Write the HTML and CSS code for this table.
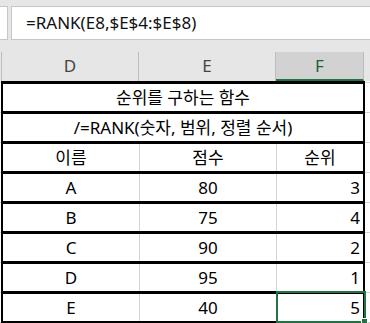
FILE: index.html
```html
<!DOCTYPE html>
<html lang="ko">
<head>
<meta charset="utf-8">
<title>RANK</title>
<link rel="stylesheet" href="styles.css">
</head>
<body>
<div class="app">
  <div class="formula-bar">
    <div class="name-box"></div>
    <div class="formula-input">=RANK(E8,$E$4:$E$8)</div>
  </div>
  <div class="col-headers">
    <div class="corner"></div>
    <div class="col-head">D</div>
    <div class="col-head">E</div>
    <div class="col-head active">F</div>
    <div class="col-head rest"></div>
  </div>
  <div class="sheet">
    <div class="grid">
      <div class="row merged"><div class="cell">순위를 구하는 함수</div></div>
      <div class="row merged"><div class="cell">/=RANK(숫자, 범위, 정렬 순서)</div></div>
      <div class="row"><div class="cell">이름</div><div class="cell">점수</div><div class="cell">순위</div></div>
      <div class="row"><div class="cell">A</div><div class="cell">80</div><div class="cell num">3</div></div>
      <div class="row"><div class="cell">B</div><div class="cell">75</div><div class="cell num">4</div></div>
      <div class="row"><div class="cell">C</div><div class="cell">90</div><div class="cell num">2</div></div>
      <div class="row"><div class="cell">D</div><div class="cell">95</div><div class="cell num">1</div></div>
      <div class="row last"><div class="cell">E</div><div class="cell">40</div><div class="cell num selected">5<span class="sel-frame"></span><span class="fill-handle"></span></div></div>
    </div>
  </div>
</div>
</body>
</html>
```
FILE: styles.css
```css
html, body {
  margin: 0;
  padding: 0;
  background: #ffffff;
}

.app {
  width: 370px;
  height: 323px;
  overflow: hidden;
  font-family: "Noto Sans", "Noto Sans CJK KR", sans-serif;
  color: #000;
}

/* formula bar */
.formula-bar {
  display: flex;
  gap: 3px;
  height: 52px;
  box-sizing: border-box;
  padding: 6px 0 12px 0;
  background: #e6e6e6;
}

.name-box {
  width: 9px;
  margin-left: -1px;
  background: #fff;
  border: 1px solid #c6c6c6;
  box-sizing: border-box;
}

.formula-input {
  flex: 1;
  margin-right: -2px;
  background: #fff;
  border: 1px solid #c6c6c6;
  box-sizing: border-box;
  padding-left: 14px;
  font-size: 17px;
  line-height: 32px;
  color: #111;
}

/* column headers */
.col-headers {
  display: grid;
  grid-template-columns: 2px 137px 137px 88px 1fr;
  height: 29px;
  background: #e6e6e6;
}

.corner {
  border-right: 1px solid #bdbdbd;
}

.col-head {
  border-right: 1px solid #bdbdbd;
  text-align: center;
  font-size: 17px;
  line-height: 28px;
  color: #444;
}

.col-head.active {
  background: #d2d2d2;
  color: #1c5e39;
  border-bottom: 2px solid #217346;
  line-height: 27px;
}

.col-head.rest {
  border-right: none;
}

/* worksheet body: row gridlines continue into column G */
.sheet {
  height: 242px;
  background-color: #fff;
  background-image: repeating-linear-gradient(to bottom,
    transparent 0, transparent 1px,
    #d4d4d4 1px, #d4d4d4 2px,
    transparent 2px, transparent 30px);
}

.grid {
  margin-left: 1px;
  width: 364px;
  box-sizing: border-box;
  border-left: 2px solid #000;
  border-right: 2px solid #000;
  background: #fff;
}

.row {
  display: grid;
  grid-template-columns: 136px 137px 87px;
  height: 30px;
  box-sizing: border-box;
  border-top: 3px solid #000;
}

.row.last {
  height: 33px;
  border-bottom: 3px solid #000;
}

.row.merged {
  grid-template-columns: 1fr;
}

.cell {
  position: relative;
  text-align: center;
  font-size: 17px;
  line-height: 27px;
  white-space: nowrap;
}

.row:not(.merged) .cell + .cell {
  border-left: 1px solid #d4d4d4;
}

.cell.num {
  text-align: right;
  padding-right: 3px;
}

/* active cell outline */
.sel-frame {
  position: absolute;
  left: -1px;
  top: -3px;
  right: -3px;
  bottom: -2px;
  border: 2px solid #217346;
  pointer-events: none;
}

.fill-handle {
  position: absolute;
  right: -5px;
  bottom: -4px;
  width: 5px;
  height: 5px;
  background: #217346;
  border: 1px solid #fff;
}
```
